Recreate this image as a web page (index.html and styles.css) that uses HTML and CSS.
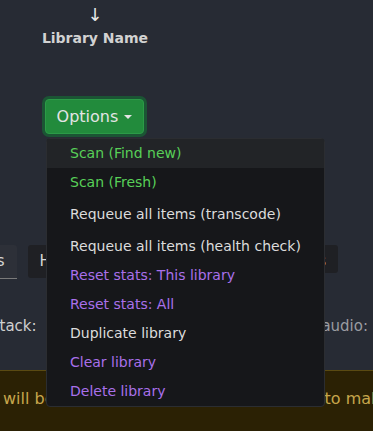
FILE: index.html
```html
<!DOCTYPE html>
<html lang="en">
<head>
    <meta charset="UTF-8">
    <meta name="viewport" content="width=device-width, initial-scale=1.0">
    <title>Library</title>
    <link rel="stylesheet" href="styles.css">
</head>
<body>
    <div class="page">
        <div class="lib-head">
            <div class="sort-arrow">↓</div>
            <div class="lib-name">Library Name</div>
        </div>

        <div class="options">
            <button class="options-btn">Options <span class="caret"></span></button>
        </div>

        <div class="tabs">
            <div class="tab active">Settings</div>
            <div class="tab">Health check</div>
            <div class="tab tab-last">Variables</div>
        </div>

        <div class="fields">
            <span class="field-label">Stack:</span>
            <span class="field-label muted">audio:</span>
        </div>

        <div class="alert">
            <span>will be</span>
            <span class="alert-tail">to make sure</span>
        </div>

        <ul class="dropdown">
            <li class="item green hover">Scan (Find new)</li>
            <li class="item green">Scan (Fresh)</li>
            <li class="item spaced">Requeue all items (transcode)</li>
            <li class="item spaced">Requeue all items (health check)</li>
            <li class="item purple">Reset stats: This library</li>
            <li class="item purple">Reset stats: All</li>
            <li class="item">Duplicate library</li>
            <li class="item purple">Clear library</li>
            <li class="item purple">Delete library</li>
        </ul>
    </div>
</body>
</html>
```

FILE: styles.css
```css
body {
    margin: 0;
    background: #272b34;
    font-family: "DejaVu Sans", Verdana, sans-serif;
    color: #dcdcdc;
    overflow: hidden;
}
.page {
    position: relative;
    height: 431px;
}
.lib-head {
    width: 106px;
    margin-left: 42px;
    padding-top: 4px;
    text-align: center;
    white-space: nowrap;
}
.sort-arrow {
    font-size: 18px;
    line-height: 22px;
    color: #e6e6e6;
}
.lib-name {
    margin-top: 4px;
    font-size: 14px;
    font-weight: bold;
    color: #d2d2d2;
    display: flex;
    justify-content: center;
}
.options {
    margin: 53px 0 0 45px;
}
.options-btn {
    width: 99px;
    height: 35px;
    background: #228b3c;
    border: 1px solid #2c9a47;
    border-radius: 4px;
    box-shadow: 0 0 0 3px #1b5534;
    color: #e4e4e4;
    font-family: "DejaVu Sans", Verdana, sans-serif;
    font-size: 16px;
    padding: 0;
}
.caret {
    display: inline-block;
    margin-left: 1px;
    vertical-align: 3px;
    border-left: 4px solid transparent;
    border-right: 4px solid transparent;
    border-top: 4px solid #e4e4e4;
}
.tabs {
    display: flex;
    margin: 111px 35px 0 -69px;
}
.tab {
    height: 33px;
    line-height: 33px;
    padding: 0 12px;
    background: #1f2024;
    border-radius: 3px;
    font-size: 15px;
    color: #d6d6d6;
}
.tab.active {
    background: #2d3038;
    border-bottom: 1px solid #7a7a7a;
    border-radius: 3px 3px 0 0;
    margin-right: 11px;
}
.tab-last {
    margin-left: auto;
    height: 28px;
}
.fields {
    display: flex;
    justify-content: space-between;
    margin: 38px 5px 0 -10px;
    font-size: 15px;
}
.field-label {
    color: #d0d0d0;
}
.field-label.muted {
    color: #9a9ca1;
}
.alert {
    display: flex;
    margin-top: 35px;
    height: 62px;
    padding: 18px 0 0 3px;
    box-sizing: border-box;
    background: #2b2104;
    border-top: 1px solid #5a4a12;
    color: #c6a64c;
    font-size: 16px;
    white-space: nowrap;
}
.alert-tail {
    margin-left: 270px;
}
.dropdown {
    position: absolute;
    left: 46px;
    top: 138px;
    width: 279px;
    margin: 0;
    padding: 0;
    list-style: none;
    background: #16171a;
    border: 1px solid #2b2d31;
    border-radius: 4px;
    box-sizing: border-box;
    height: 269px;
}
.item {
    height: 29px;
    line-height: 29px;
    padding-left: 23px;
    font-size: 14px;
    color: #dcdcdc;
}
.item.hover {
    background: #222427;
}
.item.spaced {
    margin-top: 3px;
}
.green {
    color: #58d058;
}
.purple {
    color: #a970ea;
}
```
